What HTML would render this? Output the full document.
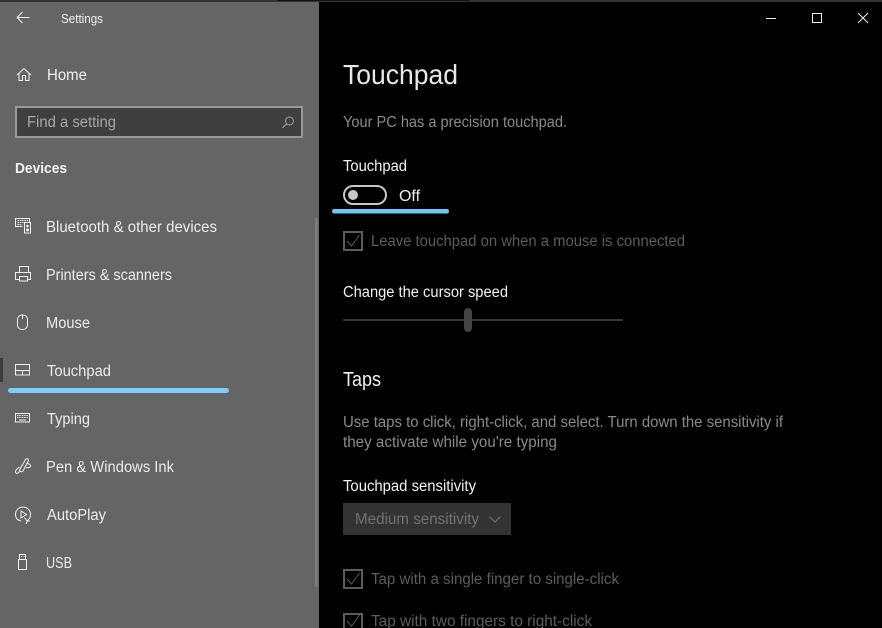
<!DOCTYPE html>
<html><head><meta charset="utf-8"><title>Settings</title>
<style>
html,body{margin:0;padding:0;background:#000;width:882px;height:628px;overflow:hidden}
svg{display:block}
text{font-family:"Liberation Sans",sans-serif;font-size:15.500px;fill:#f2f2f2}
.n{fill:#ececec}
.g{fill:#8a8a8a}
.d{fill:#5c5c5c}
.i{fill:none;stroke:#f0f0f0;stroke-width:1}
.c{fill:none;stroke:#5c5c5c;stroke-width:1}
</style></head><body>
<svg width="882" height="628" viewBox="0 0 882 628" xmlns="http://www.w3.org/2000/svg">
<rect width="882" height="628" fill="#000"/>
<rect width="319" height="628" fill="#656565"/>
<rect x="0" y="0" width="882" height="2" fill="#333"/>
<rect x="277" y="0" width="193" height="1" fill="#111"/>

<!-- title bar -->
<path class="i" d="M17 17.500H29.500M17 17.500L22.500 12M17 17.500L22.500 23"/>
<text x="61" y="23" style="font-size:12.500px" textLength="42" lengthAdjust="spacingAndGlyphs">Settings</text>
<path d="M766 18.500H776" stroke="#eee" fill="none"/>
<rect x="812.500" y="13.500" width="9" height="9" fill="none" stroke="#eee"/>
<path d="M858 13L868 23M868 13L858 23" stroke="#eee" fill="none"/>

<!-- home -->
<path class="i" d="M17 75L24 68.500L31 75M19 73.500V80.500H22.500V75.500H25.500V80.500H29V73.500"/>
<text x="47" y="80" textLength="40" lengthAdjust="spacingAndGlyphs">Home</text>

<!-- search -->
<rect x="16" y="107" width="286" height="30" fill="#3f3f3f" stroke="#999" stroke-width="2"/>
<text x="27" y="127" style="fill:#a8a8a8" textLength="89" lengthAdjust="spacingAndGlyphs">Find a setting</text>
<circle cx="289.500" cy="121" r="4" fill="none" stroke="#a0a0a0"/>
<path d="M286.500 124L282.500 128" stroke="#a0a0a0" fill="none" stroke-width="1.200"/>

<text x="15" y="173" textLength="52" lengthAdjust="spacingAndGlyphs" style="font-weight:700;font-size:15px">Devices</text>

<!-- scrollbar -->
<rect x="315" y="218" width="2.500" height="369" fill="#7e7e7e"/>

<!-- bluetooth -->
<path class="i" d="M22.500 226.500H15.500V218.500H29.500V222"/>
<rect class="i" x="24.500" y="222.500" width="6" height="10.500"/>
<path d="M17.500 220.500H28M17.500 222.500H23.500M17.500 224.500H22" stroke="#f0f0f0" stroke-dasharray="1.500 .8" fill="none"/>
<circle cx="27.500" cy="226" r="1.300" fill="#f0f0f0"/><circle cx="27.500" cy="230" r="1.500" fill="#f0f0f0"/>
<text class="n" x="46" y="232" textLength="171" lengthAdjust="spacingAndGlyphs">Bluetooth &amp; other devices</text>

<!-- printer -->
<path class="i" d="M19.500 272.500V266.500H28.500V272.500M19.500 279.500H15.500V272.500H30.500V279.500H27.500"/>
<rect class="i" x="19.500" y="276.500" width="8" height="4.500"/>
<text class="n" x="46" y="280" textLength="126" lengthAdjust="spacingAndGlyphs">Printers &amp; scanners</text>

<!-- mouse -->
<rect class="i" x="17.500" y="315" width="10" height="14.500" rx="4.500"/>
<path class="i" d="M22.500 315V319"/>
<text class="n" x="46" y="328" textLength="44" lengthAdjust="spacingAndGlyphs">Mouse</text>

<!-- touchpad -->
<rect x="0" y="358" width="3" height="24" fill="#3d3d3d"/>
<rect class="i" x="15.500" y="364.500" width="14" height="10.500"/>
<path class="i" d="M15.500 370.500H29.500M22.500 370.500V375"/>
<text class="n" x="47" y="376" textLength="64" lengthAdjust="spacingAndGlyphs">Touchpad</text>
<rect x="8" y="388" width="221" height="5" rx="2.500" fill="#7ccdf9"/>

<!-- typing -->
<rect class="i" x="15.500" y="413.500" width="14" height="8.500"/>
<path d="M17 415.500H28M17 417.500H28" stroke="#f0f0f0" stroke-dasharray="1 .7" fill="none"/>
<path d="M19 420H26" stroke="#f0f0f0" fill="none"/>
<text class="n" x="47" y="424" textLength="43" lengthAdjust="spacingAndGlyphs">Typing</text>

<!-- pen -->
<path class="i" d="M19.500 470L25.500 459.500C26.500 458 28.500 458.500 28.500 460.500L23 471C22 472.500 20 472 19.500 470ZM19.500 467C16.500 469 14.500 471.500 16 473C17.500 474 19 472.500 19.500 471M27.500 463.500C30 464 31 465.500 30.500 466.500C30 467.500 28 468 26 467.500"/>
<text class="n" x="46" y="472" textLength="128" lengthAdjust="spacingAndGlyphs">Pen &amp; Windows Ink</text>

<!-- autoplay -->
<path class="i" d="M21 521C17 520 15.500 517.500 15.500 514.500C15.500 510 19 507 23 507C27 507 30.500 510 30.500 514.500C30.500 517 29.500 519 27.500 520.500M24.500 517.500L27 521H30M27.500 520.500L26 524"/>
<path class="i" d="M21 511V518L26.500 514.500Z"/>
<text class="n" x="47" y="520" textLength="59" lengthAdjust="spacingAndGlyphs">AutoPlay</text>

<!-- usb -->
<rect class="i" x="18.500" y="559.500" width="8" height="10"/>
<path class="i" d="M19.500 559.500V554.500H25.500V559.500"/>
<path d="M21 556.500H22M23.500 556.500H24.500" stroke="#f0f0f0" fill="none"/>
<text class="n" x="46" y="568" textLength="26" lengthAdjust="spacingAndGlyphs">USB</text>

<!-- content -->
<text x="343" y="84" style="font-size:28px;fill:#e8e8e8" textLength="115" lengthAdjust="spacingAndGlyphs">Touchpad</text>
<text class="g" x="343" y="127" textLength="224" lengthAdjust="spacingAndGlyphs">Your PC has a precision touchpad.</text>
<text x="343" y="171" textLength="64" lengthAdjust="spacingAndGlyphs">Touchpad</text>

<rect x="344" y="186" width="42" height="18" rx="9" fill="none" stroke="#c8c8c8" stroke-width="2"/>
<circle cx="353" cy="195" r="5" fill="#c8c8c8"/>
<text x="399" y="201" textLength="21" lengthAdjust="spacingAndGlyphs">Off</text>
<rect x="332" y="209" width="117" height="4.500" rx="2.200" fill="#6dc8f5"/>

<rect class="c" x="344" y="232" width="18" height="18" style="stroke-width:2"/>
<path class="c" d="M347 241L351.500 246L359.500 235"/>
<text class="d" x="371" y="246" textLength="314" lengthAdjust="spacingAndGlyphs">Leave touchpad on when a mouse is connected</text>

<text x="343" y="297" textLength="165" lengthAdjust="spacingAndGlyphs">Change the cursor speed</text>
<rect x="343" y="319" width="280" height="2" fill="#3a3a3a"/>
<rect x="464" y="308" width="8" height="24" rx="4" fill="#444"/>

<text x="343" y="386" style="font-size:20px" textLength="38" lengthAdjust="spacingAndGlyphs">Taps</text>
<text class="g" x="343" y="427" textLength="440" lengthAdjust="spacingAndGlyphs">Use taps to click, right-click, and select. Turn down the sensitivity if</text>
<text class="g" x="343" y="447" textLength="214" lengthAdjust="spacingAndGlyphs">they activate while you're typing</text>

<text x="343" y="491" textLength="133" lengthAdjust="spacingAndGlyphs">Touchpad sensitivity</text>
<rect x="343" y="503" width="168" height="32" fill="#333"/>
<text x="355" y="524" style="fill:#727272" textLength="124" lengthAdjust="spacingAndGlyphs">Medium sensitivity</text>
<path d="M489.500 516.500L495 522L500.500 516.500" fill="none" stroke="#727272"/>

<rect class="c" x="344" y="570" width="18" height="18" style="stroke-width:2"/>
<path class="c" d="M347 579L351.500 584L359.500 573"/>
<text class="d" x="371" y="584" textLength="248" lengthAdjust="spacingAndGlyphs">Tap with a single finger to single-click</text>

<rect class="c" x="344" y="614" width="18" height="18" style="stroke-width:2"/>
<path class="c" d="M347 621L351.500 626L359.500 615"/>
<text class="d" x="371" y="626" textLength="221" lengthAdjust="spacingAndGlyphs">Tap with two fingers to right-click</text>
</svg>
</body></html>
